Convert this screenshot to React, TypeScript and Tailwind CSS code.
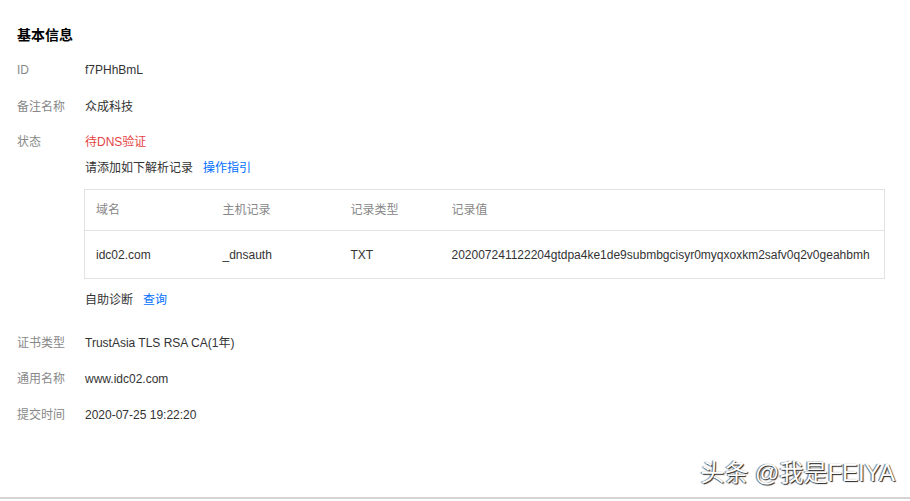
const records = [
  { domain: 'idc02.com', host: '_dnsauth', type: 'TXT', value: '202007241122204gtdpa4ke1de9submbgcisyr0myqxoxkm2safv0q2v0geahbmh' },
]

const font = { fontFamily: '"Liberation Sans", Arial, "Noto Sans CJK SC", sans-serif' }

function Row({ label, children, className = '' }: { label: string; children: React.ReactNode; className?: string }) {
  return (
    <div className={`flex text-[12px] leading-5 ${className}`}>
      <div className="w-[68px] shrink-0 text-[#888]">{label}</div>
      <div className="min-w-0 flex-1 text-[#333]">{children}</div>
    </div>
  )
}

export default function App() {
  return (
    <div className="relative h-[501px] w-[910px] overflow-hidden bg-white" style={font}>
      <div className="h-[499px] border-b-2 border-[#d4d4d4] pl-[17px] pr-[25px] pt-[25px]">
        <h2 className="text-[14px] font-bold leading-5 text-[#000]">基本信息</h2>

        <Row label="ID" className="mt-[15px]">f7PHhBmL</Row>
        <Row label="备注名称" className="mt-[17px]">众成科技</Row>
        <Row label="状态" className="mt-[15px]">
          <div className="text-[#e54545]">待DNS验证</div>
          <div className="mt-[6px]">
            请添加如下解析记录
            <a className="ml-[10px] text-[#006eff]">操作指引</a>
          </div>
          <table className="-ml-px mt-[11px] w-[801px] table-fixed border-collapse border border-[#e2e2e2] text-left">
            <thead>
              <tr className="h-[41px] border-b border-[#e2e2e2] text-[#888]">
                <th className="w-[138px] pl-[11px] font-normal">域名</th>
                <th className="w-[128px] font-normal">主机记录</th>
                <th className="w-[101px] font-normal">记录类型</th>
                <th className="font-normal">记录值</th>
              </tr>
            </thead>
            <tbody>
              {records.map((r) => (
                <tr key={r.value} className="h-[48px] text-[#333]">
                  <td className="pl-[11px]">{r.domain}</td>
                  <td>{r.host}</td>
                  <td>{r.type}</td>
                  <td className="whitespace-nowrap">{r.value}</td>
                </tr>
              ))}
            </tbody>
          </table>
          <div className="mt-[11px]">
            自助诊断
            <a className="ml-[10px] text-[#006eff]">查询</a>
          </div>
        </Row>
        <Row label="证书类型" className="mt-[23px]">TrustAsia TLS RSA CA(1年)</Row>
        <Row label="通用名称" className="mt-[16px]">www.idc02.com</Row>
        <Row label="提交时间" className="mt-[16px]">2020-07-25 19:22:20</Row>
      </div>

      <div className="absolute bottom-[16px] right-[15px] text-[24px] leading-none text-white [text-shadow:1px_1px_1px_#222,-1px_0_1px_#666]">
        头条 @我是FEIYA
      </div>
    </div>
  )
}
